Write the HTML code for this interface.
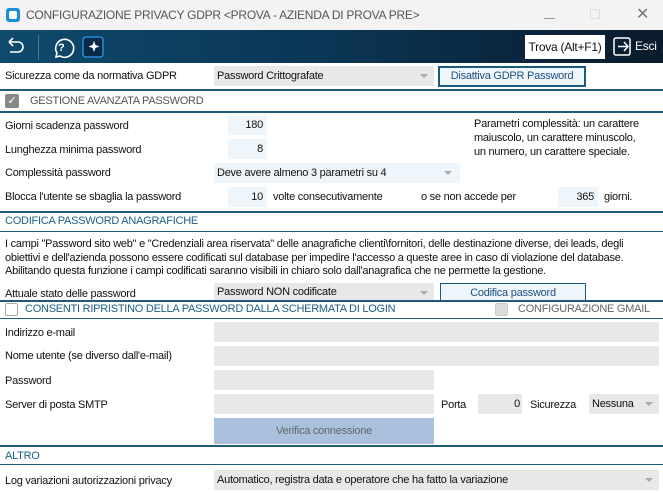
<!DOCTYPE html>
<html><head><meta charset="utf-8"><style>
*{margin:0;padding:0;box-sizing:border-box}
body{width:663px;height:493px;overflow:hidden;background:#fff;font-family:"Liberation Sans",sans-serif;font-size:11px;color:#111;position:relative;letter-spacing:-0.25px}
.a{position:absolute;white-space:nowrap}
.ln{position:absolute;left:0;width:663px;background:#1f5c7c}
.in{position:absolute;background:#eef6fc;text-align:right;padding-right:4px;line-height:20px;height:20px}
.gr{position:absolute;background:#e8e8e8;height:20px;line-height:20px;padding-left:3px}
.arr{position:absolute;right:6px;top:8px;width:0;height:0;border-left:4px solid transparent;border-right:4px solid transparent;border-top:4px solid #aaa}
.sec{color:#1d5f80}
</style></head><body>
<div class="a" style="left:0;top:0;width:663px;height:30px;background:#f3f3f3"></div>
<div class="a" style="left:6px;top:8px;width:14px;height:14px;background:#1a8fd8;border-radius:3px"></div>
<div class="a" style="left:9px;top:11px;width:8px;height:8px;background:#fff;border-radius:2px"></div>
<div class="a" style="left:26px;top:8px;font-size:12px;color:#555">CONFIGURAZIONE PRIVACY GDPR &lt;PROVA - AZIENDA DI PROVA PRE&gt;</div>
<div class="a" style="left:544px;top:18px;width:11px;height:1px;background:#999"></div>
<div class="a" style="left:590px;top:9px;width:10px;height:10px;border:1px solid #ddd"></div>
<div class="a" style="left:636px;top:4px;font-size:16px;color:#777">✕</div>
<div class="a" style="left:0;top:30px;width:663px;height:33px;background:linear-gradient(90deg,#0e4a6c,#0b3554 50%,#0a1b2c)"></div>
<svg class="a" style="left:0;top:30px" width="120" height="33"><path d="M9 12h9a5 5 0 0 1 0 10H10M9 12l4-4M9 12l4 4" stroke="#fff" stroke-width="1.6" fill="none"/><line x1="38.5" y1="5" x2="38.5" y2="30" stroke="#4a7a95"/><path d="M60 26l-4 1 1-4a9 9 0 1 1 3 3z" stroke="#fff" stroke-width="1.6" fill="none"/><text x="58" y="21" fill="#fff" font-size="11" font-family="Liberation Sans" font-weight="bold">?</text><rect x="83" y="7" width="20" height="20" rx="3" fill="#0a2a4a" stroke="#2a8ad8" stroke-width="1.5"/><path d="M94 11l1.5 4 4 1.5-4 1.5-1.5 4-1.5-4-4-1.5 4-1.5z" fill="#fff"/></svg>
<div class="a" style="left:525px;top:35px;width:80px;height:24px;background:#fff;line-height:24px;text-align:center;font-size:12px">Trova (Alt+F1)</div>
<svg class="a" style="left:612px;top:36px" width="22" height="22"><rect x="2" y="2" width="16" height="17" rx="2" fill="none" stroke="#fff" stroke-width="1.5"/><path d="M6 10.5h10M12 6l4 4.5-4 4.5" stroke="#fff" stroke-width="1.5" fill="none"/></svg>
<div class="a" style="left:635px;top:39px;color:#fff;font-size:12px">Esci</div>

<div class="a" style="left:5px;top:70px">Sicurezza come da normativa GDPR</div>
<div class="gr" style="left:214px;top:66px;width:220px">Password Crittografate<span class="arr"></span></div>
<div class="a" style="left:438px;top:66px;width:148px;height:21px;border:2px solid #1a5a80;background:#eef6fc;text-align:center;line-height:17px;color:#1d4f80">Disattiva GDPR Password</div>
<div class="ln" style="top:89px;height:2px"></div>
<div class="a" style="left:5px;top:94px;width:14px;height:14px;background:#888;border-radius:2px;color:#fff;font-size:11px;line-height:14px;text-align:center">✓</div>
<div class="a" style="left:30px;top:95px;color:#555">GESTIONE AVANZATA PASSWORD</div>
<div class="ln" style="top:111px;height:2px"></div>

<div class="a" style="left:5px;top:120px">Giorni scadenza password</div>
<div class="in" style="left:228px;top:115px;width:39px">180</div>
<div class="a" style="left:5px;top:144px">Lunghezza minima password</div>
<div class="in" style="left:228px;top:139px;width:39px">8</div>
<div class="a" style="left:5px;top:167px">Complessità password</div>
<div class="in" style="left:214px;top:163px;width:246px;text-align:left;padding-left:3px">Deve avere almeno 3 parametri su 4<span class="arr" style="right:8px"></span></div>
<div class="a" style="left:5px;top:191px">Blocca l'utente se sbaglia la password</div>
<div class="in" style="left:228px;top:187px;width:39px">10</div>
<div class="a" style="left:273px;top:191px">volte consecutivamente</div>
<div class="a" style="left:421px;top:191px">o se non accede per</div>
<div class="in" style="left:558px;top:187px;width:40px">365</div>
<div class="a" style="left:604px;top:191px">giorni.</div>
<div class="a" style="left:474px;top:117px;line-height:14px">Parametri complessità: un carattere<br>maiuscolo, un carattere minuscolo,<br>un numero, un carattere speciale.</div>
<div class="ln" style="top:211px;height:2px"></div>
<div class="a sec" style="left:5px;top:215px">CODIFICA PASSWORD ANAGRAFICHE</div>
<div class="ln" style="top:231px;height:1px"></div>
<div class="a" style="left:5px;top:238px;line-height:13.5px">I campi "Password sito web" e "Credenziali area riservata" delle anagrafiche clienti\fornitori, delle destinazione diverse, dei leads, degli<br>obiettivi e dell'azienda possono essere codificati sul database per impedire l'accesso a queste aree in caso di violazione del database.<br>Abilitando questa funzione i campi codificati saranno visibili in chiaro solo dall'anagrafica che ne permette la gestione.</div>
<div class="a" style="left:5px;top:288px">Attuale stato delle password</div>
<div class="gr" style="left:214px;top:283px;width:220px;height:17px;line-height:19px">Password NON codificate<span class="arr"></span></div>
<div class="a" style="left:440px;top:283px;width:146px;height:18px;border:1px solid #1a5a80;border-bottom:none;background:#eef6fc;text-align:center;line-height:19px;color:#1d4f80">Codifica password</div>
<div class="ln" style="top:300px;height:2px"></div>
<div class="a" style="left:5px;top:303px;width:13px;height:13px;border:1px solid #aaa;border-radius:2px"></div>
<div class="a sec" style="left:25px;top:303px">CONSENTI RIPRISTINO DELLA PASSWORD DALLA SCHERMATA DI LOGIN</div>
<div class="a" style="left:495px;top:303px;width:13px;height:13px;background:#ddd;border:1px solid #ccc;border-radius:2px"></div>
<div class="a" style="left:518px;top:303px;color:#666">CONFIGURAZIONE GMAIL</div>
<div class="ln" style="top:318px;height:1px"></div>
<div class="a" style="left:5px;top:327px">Indirizzo e-mail</div>
<div class="gr" style="left:214px;top:322px;width:445px"></div>
<div class="a" style="left:5px;top:350px">Nome utente (se diverso dall'e-mail)</div>
<div class="gr" style="left:214px;top:346px;width:445px"></div>
<div class="a" style="left:5px;top:375px">Password</div>
<div class="gr" style="left:214px;top:370px;width:220px"></div>
<div class="a" style="left:5px;top:399px">Server di posta SMTP</div>
<div class="gr" style="left:214px;top:394px;width:220px"></div>
<div class="a" style="left:441px;top:399px">Porta</div>
<div class="gr" style="left:478px;top:394px;width:44px;text-align:right;padding-right:2px">0</div>
<div class="a" style="left:530px;top:399px">Sicurezza</div>
<div class="gr" style="left:589px;top:394px;width:70px">Nessuna<span class="arr"></span></div>
<div class="a" style="left:214px;top:418px;width:220px;height:26px;background:#a9c1dc;color:#666;text-align:center;line-height:26px">Verifica connessione</div>
<div class="ln" style="top:445px;height:2px"></div>
<div class="a sec" style="left:5px;top:450px">ALTRO</div>
<div class="ln" style="top:464px;height:1px"></div>
<div class="a" style="left:5px;top:475px">Log variazioni autorizzazioni privacy</div>
<div class="gr" style="left:214px;top:470px;width:445px">Automatico, registra data e operatore che ha fatto la variazione<span class="arr"></span></div>
</body></html>
